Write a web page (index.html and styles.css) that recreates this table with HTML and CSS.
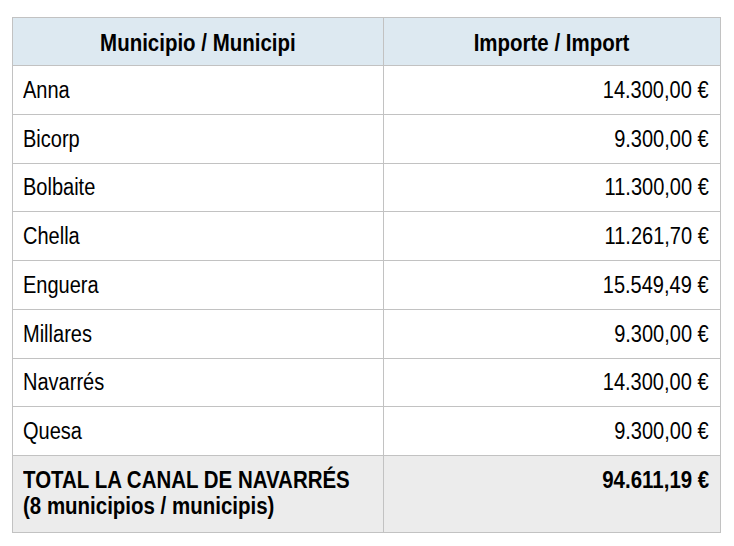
FILE: index.html
```html
<!DOCTYPE html>
<html lang="es">
<head>
<meta charset="utf-8">
<title>La Canal de Navarrés</title>
<link rel="stylesheet" href="styles.css">
</head>
<body>
<table class="grid">
  <colgroup>
    <col class="col-name">
    <col class="col-amount">
  </colgroup>
  <thead>
    <tr class="head-row">
      <th><span class="t">Municipio / Municipi</span></th>
      <th><span class="t">Importe / Import</span></th>
    </tr>
  </thead>
  <tbody>
    <tr class="row"><td class="name"><span class="t">Anna</span></td><td class="amount"><span class="t">14.300,00 €</span></td></tr>
    <tr class="row"><td class="name"><span class="t">Bicorp</span></td><td class="amount"><span class="t">9.300,00 €</span></td></tr>
    <tr class="row"><td class="name"><span class="t">Bolbaite</span></td><td class="amount"><span class="t">11.300,00 €</span></td></tr>
    <tr class="row"><td class="name"><span class="t">Chella</span></td><td class="amount"><span class="t">11.261,70 €</span></td></tr>
    <tr class="row"><td class="name"><span class="t">Enguera</span></td><td class="amount"><span class="t">15.549,49 €</span></td></tr>
    <tr class="row"><td class="name"><span class="t">Millares</span></td><td class="amount"><span class="t">9.300,00 €</span></td></tr>
    <tr class="row"><td class="name"><span class="t">Navarrés</span></td><td class="amount"><span class="t">14.300,00 €</span></td></tr>
    <tr class="row"><td class="name"><span class="t">Quesa</span></td><td class="amount"><span class="t">9.300,00 €</span></td></tr>
    <tr class="total-row">
      <td class="name"><span class="t">TOTAL LA CANAL DE NAVARRÉS<br>(8 municipios / municipis)</span></td>
      <td class="amount"><span class="t">94.611,19 €</span></td>
    </tr>
  </tbody>
</table>
</body>
</html>
```

FILE: styles.css
```css
html, body {
  margin: 0;
  padding: 0;
  background: #ffffff;
}
body {
  padding: 17px 0 0 12px;
  font-family: "Liberation Sans", Arial, sans-serif;
  color: #000000;
}
.grid {
  border-collapse: collapse;
  width: 708px;
  table-layout: fixed;
}
.col-name { width: 371px; }
.col-amount { width: 337px; }
.grid th, .grid td {
  border: 1px solid #c2c2c2;
  padding: 0 11px 0 10px;
  overflow: visible;
}
.t {
  display: inline-block;
  white-space: nowrap;
  transform: scaleX(0.87);
  transform-origin: left center;
}
.head-row {
  height: 48px;
  background: #dde9f1;
}
.head-row th {
  font-size: 23px;
  font-weight: bold;
  text-align: center;
  vertical-align: middle;
  line-height: 26px;
  padding-top: 3px;
}
.head-row .t {
  transform: scaleX(0.89);
  transform-origin: center center;
}
.row {
  height: 48.75px;
}
.row td {
  font-size: 23px;
  line-height: 26px;
  vertical-align: middle;
}
.amount {
  text-align: right;
}
.amount .t {
  transform-origin: right center;
}
.total-row {
  height: 77px;
  background: #ececec;
}
.total-row td {
  font-size: 23px;
  font-weight: bold;
  line-height: 26px;
  vertical-align: top;
  padding-top: 11px;
}
.total-row .t {
  transform: scaleX(0.89);
  transform-origin: left top;
}
.total-row .amount .t {
  transform-origin: right top;
}
```
